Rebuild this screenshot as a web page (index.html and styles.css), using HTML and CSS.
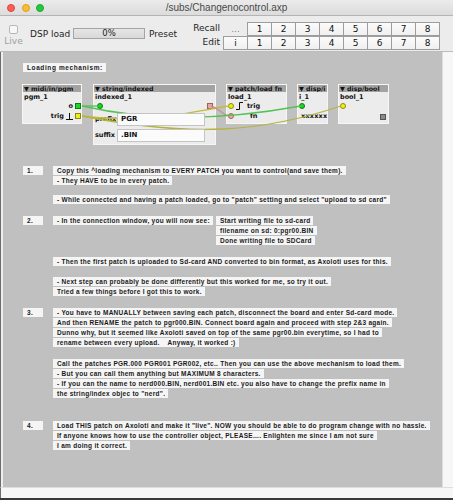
FILE: index.html
```html
<!DOCTYPE html>
<html>
<head>
<meta charset="utf-8">
<title>/subs/Changenocontrol.axp</title>
<link rel="stylesheet" href="styles.css">
</head>
<body>
<div class="window">
  <div class="titlebar">
    <div class="lights"><span class="light red"></span><span class="light yellow"></span><span class="light green"></span></div>
    <div class="title">/subs/Changenocontrol.axp</div>
    <div></div>
  </div>
  <div class="toolbar">
    <div class="live"><span class="checkbox"></span><span class="live-label">Live</span></div>
    <div class="dsp-label">DSP load</div>
    <div class="meter">0%</div>
    <div class="preset-label">Preset</div>
    <div class="preset-labels"><span>Recall</span><span>Edit</span></div>
    <div class="preset-grid">
      <div class="grid-row">
        <span class="cell blank">...</span><span class="cell">1</span><span class="cell">2</span><span class="cell">3</span><span class="cell">4</span><span class="cell">5</span><span class="cell">6</span><span class="cell">7</span><span class="cell">8</span>
      </div>
      <div class="grid-row">
        <span class="cell">i</span><span class="cell">1</span><span class="cell">2</span><span class="cell">3</span><span class="cell">4</span><span class="cell">5</span><span class="cell">6</span><span class="cell">7</span><span class="cell">8</span>
      </div>
    </div>
  </div>
  <div class="main">
    <div class="canvas">
      <div class="note c-loading"><span class="line">Loading mechanism:</span></div>

      <div class="obj o-pgm">
        <div class="obj-head">▼ midi/in/pgm</div>
        <div class="obj-name">pgm_1</div>
        <div class="port port-out"><span>o</span><i class="sq sq-green"></i></div>
        <div class="port port-out"><span>trig</span><svg class="sym" width="7" height="7" viewBox="0 0 7 7"><path d="M0 6.5H7M3.5 6.5V0" stroke="#111" stroke-width="1" fill="none"/></svg><i class="sq sq-yellow"></i></div>
      </div>

      <div class="obj o-idx">
        <div class="obj-head">▼ string/indexed</div>
        <div class="obj-name">indexed_1</div>
        <div class="port port-split"><i class="dot dot-green"></i><i class="sq sq-pink"></i></div>
        <div class="field-row"><span class="field-label">prefix</span><span class="field">PGR</span></div>
        <div class="field-row"><span class="field-label">suffix</span><span class="field">.BIN</span></div>
      </div>

      <div class="obj o-load">
        <div class="obj-head">▼ patch/load fn</div>
        <div class="obj-name">load_1</div>
        <div class="port"><i class="dot dot-yellow"></i><svg class="sym sym-edge" width="8" height="8" viewBox="0 0 8 8"><path d="M0 7.5H3.5V0.5H7" stroke="#111" stroke-width="1" fill="none"/></svg><span>trig</span></div>
        <div class="port"><i class="dot dot-pink"></i><span class="fn">fn</span></div>
      </div>

      <div class="obj o-dispi">
        <div class="obj-head">▼ disp/i</div>
        <div class="obj-name">i_1</div>
        <div class="port"><i class="dot dot-green"></i></div>
        <div class="port"><span class="xx">xxxxxx</span></div>
      </div>

      <div class="obj o-bool">
        <div class="obj-head">▼ disp/bool</div>
        <div class="obj-name">bool_1</div>
        <div class="port"><i class="dot dot-yellow"></i></div>
        <div class="port port-end"><i class="led"></i></div>
      </div>

      <svg class="wires" width="439" height="434" viewBox="0 0 439 434">
        <path d="M79 64 C140 72 175 62 226 54" stroke="#c2bd3c" stroke-width="1.3" fill="none"/>
        <path d="M79 64 C190 86 260 80 338 54" stroke="#b5b340" stroke-width="1.3" fill="none"/>
        <path d="M208 54 C216 56 218 62 226 64" stroke="#c99090" stroke-width="1.3" fill="none"/>
        <path d="M79 54 C86 54 88 54 95 54" stroke="#52c252" stroke-width="1.3" fill="none"/>
        <path d="M79 54 C150 70 220 68 298 54" stroke="#52c252" stroke-width="1.3" fill="none"/>
      </svg>

      <div class="note c-num1"><span class="line num">1.</span></div>
      <div class="note c-step1">
        <span class="line">Copy this ^loading mechanism to EVERY PATCH you want to control(and save them).</span>
        <span class="line">- They HAVE to be in every patch.</span>
      </div>
      <div class="note c-upload">
        <span class="line">- While connected and having a patch loaded, go to "patch" setting and select "upload to sd card"</span>
      </div>

      <div class="note c-num2"><span class="line num">2.</span></div>
      <div class="note c-conn"><span class="line">- In the connection window, you will now see:</span></div>
      <div class="note c-log">
        <span class="line">Start writing file to sd-card</span>
        <span class="line">filename on sd: 0:pgr00.BIN</span>
        <span class="line">Done writing file to SDCard</span>
      </div>
      <div class="note c-then">
        <span class="line">- Then the first patch is uploaded to Sd-card AND converted to bin format, as Axoloti uses for this.</span>
      </div>
      <div class="note c-next">
        <span class="line">- Next step can probably be done differently but this worked for me, so try it out.</span>
        <span class="line">Tried a few things before I got this to work.</span>
      </div>

      <div class="note c-num3"><span class="line num">3.</span></div>
      <div class="note c-manual">
        <span class="line">- You have to MANUALLY between saving each patch, disconnect the board and enter Sd-card mode.</span>
        <span class="line">And then RENAME the patch to pgr000.BIN. Connect board again and proceed with step 2&amp;3 again.</span>
        <span class="line">Dunno why, but it seemed like Axoloti saved on top of the same pgr00.bin everytime, so I had to</span>
        <span class="line">rename between every upload.&nbsp;&nbsp;&nbsp; Anyway, it worked :)</span>
      </div>
      <div class="note c-call">
        <span class="line">Call the patches PGR.000 PGR001 PGR002, etc.. Then you can use the above mechanism to load them.</span>
        <span class="line">- But you can call them anything but MAXIMUM 8 characters.</span>
        <span class="line">- If you can the name to nerd000.BIN, nerd001.BIN etc. you also have to change the prefix name in</span>
        <span class="line">the string/index objec to "nerd".</span>
      </div>

      <div class="note c-num4"><span class="line num">4.</span></div>
      <div class="note c-final">
        <span class="line">Load THIS patch on Axoloti and make it "live". NOW you should be able to do program change with no hassle.</span>
        <span class="line">If anyone knows how to use the controller object, PLEASE.... Enlighten me since I am not sure</span>
        <span class="line">I am doing it correct.</span>
      </div>
    </div>
    <div class="vscroll"></div>
  </div>
  <div class="hscroll"></div>
</div>
</body>
</html>
```

FILE: styles.css
```css
* { box-sizing: border-box; margin: 0; padding: 0; }
html, body { width: 453px; height: 500px; overflow: hidden; background: #ececec; }
body { font-family: "DejaVu Sans", "Liberation Sans", sans-serif; color: #1e1e1e; }

.window {
  width: 453px;
  height: 500px;
  display: flex;
  flex-direction: column;
  background: #ececec;
  border-bottom: 2px solid #3a3a3a;
}

/* title bar */
.titlebar {
  height: 16px;
  display: grid;
  grid-template-columns: 1fr auto 1fr;
  align-items: center;
  background: linear-gradient(#ebebeb, #dcdcdc);
  border-bottom: 1px solid #b4b4b4;
}
.lights { display: flex; gap: 6.5px; padding-left: 7px; }
.light { width: 8px; height: 8px; border-radius: 50%; }
.red { background: #fc5f57; border: 0.5px solid #e0443e; }
.yellow { background: #fdbc2e; border: 0.5px solid #dea123; }
.green { background: #27c840; border: 0.5px solid #1aab29; }
.title { font-family: "Liberation Sans", Arial, sans-serif; font-size: 10px; color: #4a4a4a; line-height: 15px; }

/* toolbar */
.toolbar {
  height: 37px;
  display: flex;
  align-items: center;
  padding-left: 4px;
  font-size: 9px;
  border-bottom: 1px solid #bcbcbc;
}
.live { width: 19px; display: flex; flex-direction: column; align-items: center; gap: 2px; margin-right: 7px; margin-top: 3px; }
.checkbox { width: 9px; height: 9px; border: 1px solid #b8b8b8; border-radius: 2px; background: #f7f7f7; }
.live-label { font-size: 9px; line-height: 10px; color: #a0a0a0; }
.dsp-label { width: 43px; }
.meter {
  width: 72px; height: 11px;
  border: 1px solid #a4a4a4;
  background: linear-gradient(#e6e6e6, #d8d8d8);
  text-align: center; font-size: 8.5px; line-height: 9px; color: #222;
  margin-right: 4px;
}
.preset-label { width: 27px; }
.preset-labels {
  display: flex; flex-direction: column; align-items: flex-end;
  width: 30px; margin-left: 14px; margin-right: 3px;
  line-height: 14px; margin-top: 3px;
}
.preset-grid { display: flex; flex-direction: column; margin-top: 5px; }
.grid-row { display: flex; }
.cell {
  width: 25px; height: 14px;
  margin-right: -1px;
  border: 1px solid #9d9d9d;
  background: linear-gradient(#fbfbfb, #f0f0f0);
  font-size: 9px; line-height: 12px; text-align: center; color: #111;
}
.cell.blank { border-color: transparent; background: transparent; color: #888; }

/* main area */
.main {
  height: 435px;
  display: flex;
  border-left: 1px solid #6e6e6e;
  padding-left: 2px;
  background: #eeeeee;
}
.canvas {
  position: relative;
  width: 439px;
  height: 435px;
  background: #c0c0c0;
  overflow: hidden;
  font-family: "DejaVu Sans", sans-serif;
}
.vscroll { flex: 1; background: #f7f7f7; border-left: 1px solid #dedede; }
.hscroll { height: 11px; background: #f7f7f7; border-top: 1px solid #dedede; border-left: 1px solid #6e6e6e; }

/* wires */
.wires { position: absolute; left: 0; top: 0; z-index: 1; pointer-events: none; }

/* objects */
.obj {
  position: absolute;
  top: 32px;
  height: 40px;
  background: #ececec;
  border: 1px solid #f6f6f6;
  font-size: 6.5px;
  color: #111;
}
.obj-head {
  height: 7px;
  background: #a3a3a3;
  font-weight: bold;
  font-size: 6.3px;
  line-height: 7px;
  padding-left: 1px;
  white-space: nowrap;
  overflow: hidden;
}
.obj-name { height: 9px; line-height: 10px; padding-left: 1px; font-weight: bold; white-space: nowrap; }
.port { height: 10px; display: flex; align-items: center; gap: 2px; padding: 0 1px; font-weight: bold; white-space: nowrap; }
.port-out { justify-content: flex-end; padding-right: 0; }
.port-split { justify-content: space-between; padding: 0 2px 0 3px; }
.port-end { justify-content: flex-end; padding-right: 2px; }
.sym { flex: none; }
.sym-edge { margin-right: 1px; }
.fn { margin-left: 14px; }
.xx { margin-left: 2px; letter-spacing: 0.2px; }

.sq { width: 6px; height: 6px; flex: none; display: block; }
.sq-green { background: #22d422; border: 1px solid #0e7d0e; }
.sq-yellow { background: #eded1a; border: 1px solid #8a8a10; }
.sq-pink { background: #eaa6a6; border: 1px solid #9c6060; }
.dot { width: 6px; height: 6px; border-radius: 50%; flex: none; display: block; }
.dot-green { background: #1fd41f; border: 1px solid #0e7d0e; }
.dot-yellow { background: #f0ee16; border: 1px solid #8a8a10; }
.dot-pink { background: #f0a8a8; border: 1px solid #a06060; }
.led { display: block; width: 6px; height: 6px; background: #8a8a8a; border: 1px solid #555; margin-top: 1px; }

.o-pgm { left: 19px; width: 60px; }
.o-idx { left: 90px; width: 123px; height: 61px; }
.o-load { left: 223px; width: 61px; }
.o-dispi { left: 294px; width: 31px; }
.o-bool { left: 335px; width: 51px; }

.field-row { display: flex; align-items: center; height: 16px; padding-left: 1px; font-weight: bold; }
.field-label { width: 22px; }
.field {
  position: relative; z-index: 2;
  width: 88px; height: 13px;
  background: #fbfbfb;
  border: 1px solid #c4c4c4;
  line-height: 11px;
  padding-left: 3px;
  font-size: 7px;
  font-weight: bold;
}

/* comments */
.note {
  position: absolute;
  display: flex;
  flex-direction: column;
  align-items: flex-start;
  gap: 1px;
}
.line {
  display: block;
  height: 9px;
  line-height: 9px;
  padding: 0 3px 0 4px;
  background: #f5f5f5;
  font-family: "Liberation Sans", Arial, sans-serif;
  font-size: 6.5px;
  font-weight: bold;
  letter-spacing: 0.28px;
  color: #1a1a1a;
  white-space: pre;
}
.line.num { width: 20px; }

.c-loading { left: 20px; top: 11px; }
.c-loading .line { letter-spacing: 0.6px; }
.c-num1 { left: 20px; top: 114px; }
.c-step1 { left: 50px; top: 114px; }
.c-upload { left: 50px; top: 143px; }
.c-num2 { left: 20px; top: 164px; }
.c-conn { left: 50px; top: 164px; }
.c-log { left: 213px; top: 164px; }
.c-then { left: 50px; top: 205px; }
.c-next { left: 50px; top: 225px; }
.c-num3 { left: 20px; top: 256px; }
.c-manual { left: 50px; top: 256px; }
.c-call { left: 50px; top: 307px; }
.c-num4 { left: 20px; top: 369px; }
.c-final { left: 50px; top: 369px; }
```
